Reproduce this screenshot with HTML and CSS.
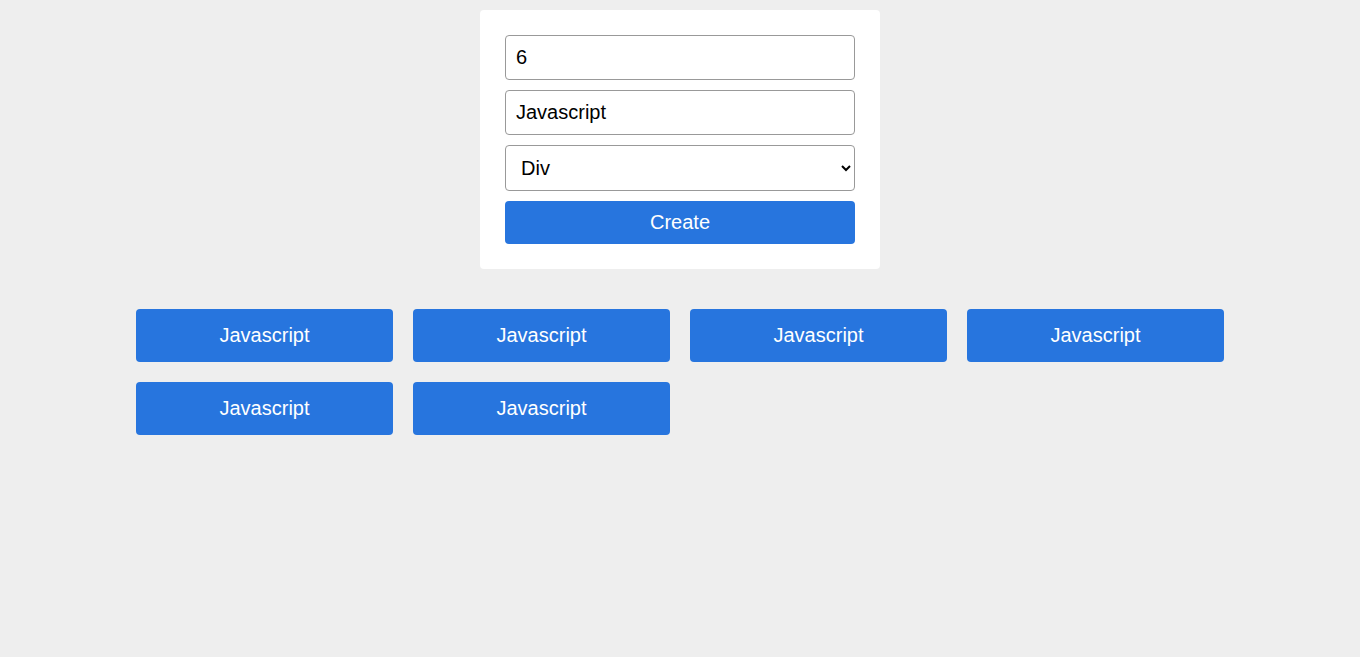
FILE: index.html
```html
<!DOCTYPE html>
<html>
<head>
<meta charset="utf-8">
<link rel="stylesheet" href="styles.css">
</head>
<body>
<div class="page">
  <form class="card">
    <input class="field" type="number" value="6">
    <input class="field" type="text" value="Javascript">
    <select class="field select">
      <option>Div</option>
    </select>
    <button type="button" class="create">Create</button>
  </form>
  <div class="grid">
    <div class="item">Javascript</div>
    <div class="item">Javascript</div>
    <div class="item">Javascript</div>
    <div class="item">Javascript</div>
    <div class="item">Javascript</div>
    <div class="item">Javascript</div>
  </div>
</div>
</body>
</html>
```
FILE: styles.css
```css
* { box-sizing: border-box; }
html, body { margin: 0; padding: 0; }
body {
  background: #eeeeee;
  font-family: "Liberation Sans", Arial, sans-serif;
  font-size: 20px;
}
.page {
  padding-top: 10px;
  display: flex;
  flex-direction: column;
  align-items: center;
}
.card {
  width: 400px;
  background: #fff;
  border-radius: 4px;
  padding: 25px;
  display: flex;
  flex-direction: column;
  gap: 10px;
  margin: 0;
}
.field {
  display: block;
  width: 100%;
  font-family: "Liberation Sans", Arial, sans-serif;
  font-size: 20px;
  line-height: 23px;
  padding: 10px;
  border: 1px solid #999;
  border-radius: 4px;
  color: #000;
  background: #fff;
  outline: none;
  margin: 0;
}
.field[type=number]::-webkit-inner-spin-button,
.field[type=number]::-webkit-outer-spin-button { -webkit-appearance: none; margin: 0; }
.field[type=number] { -moz-appearance: textfield; }
.select { height: 46px; padding: 10px 6px 10px 11px; }
.create {
  display: block;
  width: 100%;
  font-family: "Liberation Sans", Arial, sans-serif;
  font-size: 20px;
  line-height: 23px;
  padding: 10px;
  border: none;
  border-radius: 4px;
  background: #2775de;
  color: #fff;
  margin: 0;
}
.grid {
  width: 80%;
  margin-top: 40px;
  display: grid;
  grid-template-columns: repeat(4, 1fr);
  gap: 20px;
}
.item {
  background: #2775de;
  color: #fff;
  border-radius: 4px;
  padding: 15px;
  line-height: 23px;
  text-align: center;
}
```
